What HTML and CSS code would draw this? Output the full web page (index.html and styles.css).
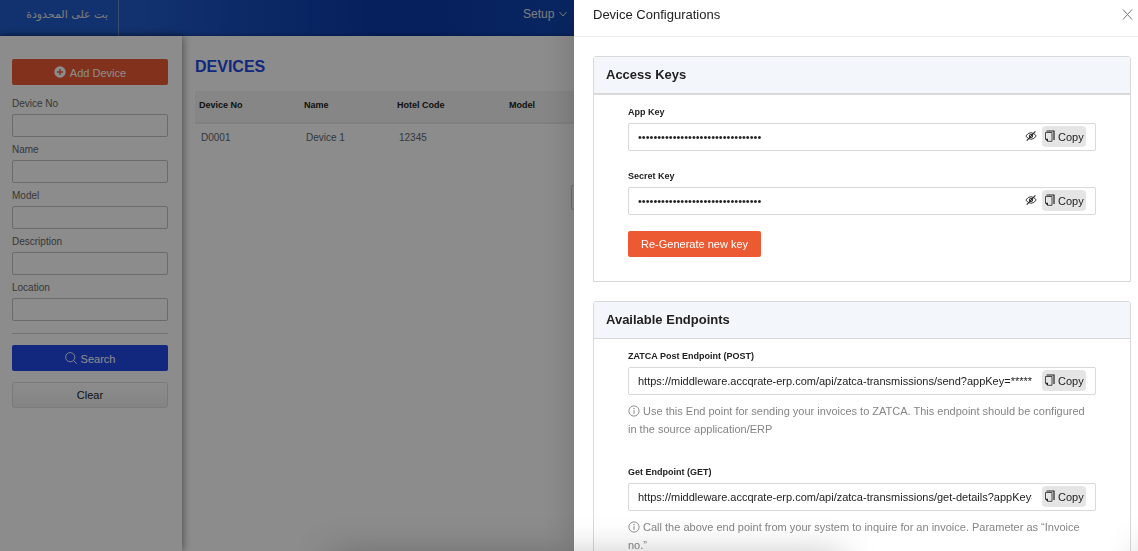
FILE: index.html
```html
<!DOCTYPE html>
<html lang="en">
<head>
<meta charset="utf-8">
<meta name="viewport" content="width=device-width, initial-scale=1">
<title>Device Configurations</title>
<link rel="stylesheet" href="styles.css">
</head>
<body>
<svg class="sprite" aria-hidden="true">
  <symbol id="copy" viewBox="0 0 12 12"><path d="M2.500 1h7.500v9" fill="none" stroke="currentColor" stroke-width="1.200"/><path d="M1.500 2.500h6.500v8.800H3.700L1.500 9.200z" fill="none" stroke="currentColor" stroke-width=".8"/><path d="M1.500 8.700h2.500v2.600H3.600L1.500 9.300z" fill="currentColor"/></symbol>
  <symbol id="eye-off" viewBox="0 0 12 12"><path d="M.8 6Q3 2.700 6 2.700T11.200 6Q9 9.300 6 9.300T.8 6z" fill="none" stroke="currentColor" stroke-width=".9"/><circle cx="6" cy="6" r="1.700" fill="none" stroke="currentColor" stroke-width=".9"/><path d="M1.800 10.600L10.400 1.400" stroke="currentColor" stroke-width="1.100"/></symbol>
  <symbol id="info" viewBox="0 0 12 12"><circle cx="6" cy="6" r="5.100" fill="none" stroke="currentColor" stroke-width=".9"/><path d="M6 5.100v3.700" stroke="currentColor" stroke-width="1"/><circle cx="6" cy="3.500" r=".7" fill="currentColor"/></symbol>
</svg>

<header class="topbar">
  <div class="brand" lang="ar" dir="rtl">بت على المحدودة</div>
  <nav class="menu">
    <a class="menu-link" href="#">Setup
      <svg class="chevron" viewBox="0 0 10 10"><path d="M1.500 3L5 7l3.500-4" fill="none" stroke="currentColor" stroke-width="1"/></svg>
    </a>
  </nav>
</header>

<div class="page">
  <aside class="sidebar">
    <button class="btn btn-orange btn-icon" type="button">
      <svg class="icon" viewBox="0 0 12 12"><circle cx="6" cy="6" r="5.700" fill="currentColor"/><path d="M6 3v6M3 6h6" stroke="#ec5a33" stroke-width="1.300"/></svg>
      Add Device
    </button>
    <form class="filters">
      <label class="filter-label" for="f-no">Device No</label><input class="filter-input" id="f-no" type="text">
      <label class="filter-label" for="f-name">Name</label><input class="filter-input" id="f-name" type="text">
      <label class="filter-label" for="f-model">Model</label><input class="filter-input" id="f-model" type="text">
      <label class="filter-label" for="f-desc">Description</label><input class="filter-input" id="f-desc" type="text">
      <label class="filter-label" for="f-loc">Location</label><input class="filter-input" id="f-loc" type="text">
      <hr class="divider">
      <button class="btn btn-blue btn-icon" type="button">
        <svg class="icon" viewBox="0 0 12 12"><circle cx="5.200" cy="5.200" r="4.600" fill="none" stroke="currentColor" stroke-width=".9"/><path d="M8.500 8.500l3.200 3.200" stroke="currentColor" stroke-width="1"/></svg>
        Search
      </button>
      <button class="btn btn-plain" type="reset">Clear</button>
    </form>
  </aside>
  <main class="content">
    <h1 class="title">DEVICES</h1>
    <table class="devices">
      <colgroup><col class="col-no"><col class="col-name"><col class="col-code"><col></colgroup>
      <thead><tr><th>Device No</th><th>Name</th><th>Hotel Code</th><th>Model</th></tr></thead>
      <tbody><tr><td>D0001</td><td>Device 1</td><td>12345</td><td></td></tr></tbody>
    </table>
    <button class="pager" type="button" aria-label="Page"></button>
  </main>
</div>

<div class="mask"></div>

<section class="drawer" role="dialog" aria-labelledby="drawer-title">
  <div class="drawer-head">
    <h2 class="drawer-title" id="drawer-title">Device Configurations</h2>
    <button class="close" type="button" aria-label="Close"><svg class="icon-sm" viewBox="0 0 11 11"><path d="M1 .5l9 10M10 .5l-9 10" stroke="currentColor" stroke-width="1" fill="none"/></svg></button>
  </div>
  <div class="drawer-body">
    <section class="card card-keys">
      <h3 class="card-title">Access Keys</h3>
      <div class="card-body">
        <div class="field">
          <label class="label" for="app-key">App Key</label>
          <div class="box">
            <input class="value" id="app-key" type="password" value="12345678901234567890123456789012">
            <button class="eye" type="button" aria-label="Show key"><svg class="icon"><use href="#eye-off"/></svg></button>
            <button class="copy" type="button"><svg class="icon"><use href="#copy"/></svg>Copy</button>
          </div>
        </div>
        <div class="field">
          <label class="label" for="secret-key">Secret Key</label>
          <div class="box">
            <input class="value" id="secret-key" type="password" value="12345678901234567890123456789012">
            <button class="eye" type="button" aria-label="Show key"><svg class="icon"><use href="#eye-off"/></svg></button>
            <button class="copy" type="button"><svg class="icon"><use href="#copy"/></svg>Copy</button>
          </div>
        </div>
        <button class="btn btn-orange btn-inline" type="button">Re-Generate new key</button>
      </div>
    </section>
    <section class="card">
      <h3 class="card-title">Available Endpoints</h3>
      <div class="card-body">
        <div class="endpoint">
          <label class="label" for="post-url">ZATCA Post Endpoint (POST)</label>
          <div class="box">
            <input class="value value-url" id="post-url" type="text" value="https://middleware.accqrate-erp.com/api/zatca-transmissions/send?appKey=*****">
            <button class="copy" type="button"><svg class="icon"><use href="#copy"/></svg>Copy</button>
          </div>
          <p class="help"><svg class="icon-info"><use href="#info"/></svg> Use this End point for sending your invoices to ZATCA. This endpoint should be configured in the source application/ERP</p>
        </div>
        <div class="endpoint">
          <label class="label" for="get-url">Get Endpoint (GET)</label>
          <div class="box">
            <input class="value value-url" id="get-url" type="text" value="https://middleware.accqrate-erp.com/api/zatca-transmissions/get-details?appKey=*****">
            <button class="copy" type="button"><svg class="icon"><use href="#copy"/></svg>Copy</button>
          </div>
          <p class="help"><svg class="icon-info"><use href="#info"/></svg> Call the above end point from your system to inquire for an invoice. Parameter as “Invoice no.”</p>
        </div>
      </div>
    </section>
  </div>
</section>
<div class="shade shade-center"></div>
<div class="shade shade-corner"></div>
</body>
</html>
```
FILE: styles.css
```css
* { box-sizing: border-box; }
html, body { height: 100%; }
body {
  margin: 0;
  display: flex;
  flex-direction: column;
  overflow: hidden;
  background: #fff;
  color: #222;
  font-family: "Liberation Sans", Arial, sans-serif;
  font-size: 11px;
}
button, input { font: inherit; color: inherit; }
button { margin: 0; padding: 0; border: 0; background: none; }
.sprite { position: absolute; width: 0; height: 0; }
.icon { width: 12px; height: 12px; flex: none; }
.icon-sm { width: 11px; height: 11px; display: block; }

.topbar {
  flex: none;
  height: 36px;
  display: flex;
  background: linear-gradient(90deg, #215bcb 0, #215bcb 12%, #0b3aa9 33%, #0b3aa9 38%, #1046b4 50%);
  color: #fff;
}
.brand {
  width: 119px;
  padding-right: 10px;
  border-right: 1px solid #7190cf;
  color: #e2e2e2;
  font: 11px/30px "DejaVu Sans", sans-serif;
  white-space: nowrap;
}
.menu { margin-left: 404px; }
.menu-link {
  display: flex;
  align-items: center;
  gap: 4px;
  color: #e2e2e2;
  font-size: 12px;
  line-height: 28px;
  text-decoration: none;
}
.chevron { width: 10px; height: 10px; }

.page { flex: 1; display: flex; box-shadow: 0 0 4px rgba(0, 0, 0, .4); }
.sidebar {
  width: 182px;
  flex: none;
  padding: 23px 14px 0 12px;
  box-shadow: 1px 0 8px rgba(0, 0, 0, .45);
}
.btn {
  display: flex;
  align-items: center;
  justify-content: center;
  gap: 4px;
  width: 100%;
  height: 26px;
  border-radius: 2px;
}
.btn-icon { padding-top: 2px; }
.btn-icon .icon { margin-bottom: 3px; }
.btn-orange { background: #ec5a33; color: #fff; }
.btn-blue { background: #2248e6; color: #fff; }
.btn-plain {
  margin-top: 11px;
  border: 1px solid #dedede;
  background: linear-gradient(#fff, #f0f0f0);
  border-radius: 3px;
}
.btn-inline { width: 133px; margin-top: 16px; padding-bottom: 1px; }
.filters { padding-top: 6px; }
.filter-label {
  display: block;
  height: 23px;
  padding-top: 3px;
  font-size: 10px;
  line-height: 20px;
  color: #666;
}
.filter-input {
  display: block;
  width: 100%;
  height: 23px;
  border: 1px solid #c4c4c4;
  border-radius: 2px;
  background: #fff;
}
.divider { height: 1px; margin: 12px 0 11px; border: 0; background: #cfcfcf; }

.content { flex: 1; min-width: 0; padding: 20px 13px 0; }
.title { margin: 0; font-size: 16px; line-height: 22px; color: #2248e6; }
.devices {
  width: 100%;
  margin-top: 13px;
  border-collapse: collapse;
  table-layout: fixed;
  text-align: left;
}
.col-no { width: 105px; }
.col-name { width: 93px; }
.col-code { width: 112px; }
.devices th {
  height: 32px;
  padding: 0 4px 4px;
  background: #f4f4f4;
  border-bottom: 2px solid #e9e9e9;
  font-size: 9px;
}
.devices td { height: 27px; padding: 0 6px; font-size: 10px; color: #5d6873; }
.pager {
  display: block;
  width: 178px;
  height: 25px;
  margin: 35px auto 0;
  border: 1px solid #c8c8c8;
  border-radius: 2px;
}

.mask { position: fixed; inset: 0; background: rgba(0, 0, 0, .45); }
.drawer {
  position: fixed;
  top: 0;
  right: 0;
  bottom: 0;
  width: calc(50% - 5px);
  overflow: hidden;
  background: #fff;
  box-shadow: -4px 0 30px rgba(0, 0, 0, .16);
}
.drawer-head {
  display: flex;
  align-items: center;
  justify-content: space-between;
  height: 37px;
  padding: 0 5px 7px 19px;
  border-bottom: 1px solid #ebebeb;
}
.drawer-title { margin: 0; font-size: 13px; font-weight: 400; }
.close { color: #777; }
.drawer-body { padding: 19px 7px 0 19px; }
.card { margin-bottom: 19px; border: 1px solid #d9d9d9; border-radius: 3px 3px 0 0; }
.card-title {
  margin: 0;
  padding-left: 12px;
  border-bottom: 1px solid #d9d9d9;
  background: #f3f6fa;
  font-size: 13px;
  line-height: 36px;
}
.card-keys .card-title { border-bottom-width: 2px; }
.card-body { padding: 7px 34px 24px; }
.field + .field { margin-top: 15px; }
.endpoint + .endpoint { margin-top: 24px; }
.label { display: block; font-size: 9px; font-weight: 700; line-height: 21px; }
.box {
  display: flex;
  align-items: center;
  height: 28px;
  padding: 0 9px 1px;
  border: 1px solid #d9d9d9;
  border-radius: 2px;
}
.value {
  flex: 1;
  min-width: 0;
  padding: 0;
  border: 0;
  outline: 0;
  background: none;
}
.value-url { margin-right: 6px; }
.eye { display: flex; margin-right: 1px; padding-bottom: 2px; }
.copy {
  display: flex;
  align-items: center;
  gap: 2px;
  width: 44px;
  height: 21px;
  margin-left: 4px;
  padding-left: 2px;
  border-radius: 4px;
  background: #e5e5e5;
}
.copy .icon { margin-bottom: 2px; }
.help { margin: 7px 0 0; line-height: 18px; color: #858585; }
.icon-info { width: 12px; height: 12px; vertical-align: -2px; }

.shade { position: fixed; height: 40px; pointer-events: none; }
.shade-center { bottom: -44px; left: 29%; right: 26%; box-shadow: 0 0 36px rgba(0, 0, 0, .25); }
.shade-corner { bottom: -36px; left: 100%; width: 200px; box-shadow: 0 0 36px rgba(0, 0, 0, .2); }
```
